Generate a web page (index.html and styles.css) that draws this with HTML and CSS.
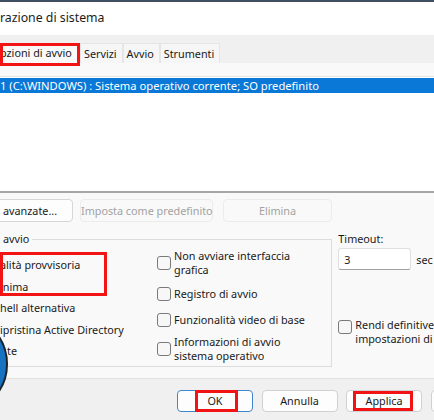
FILE: index.html
```html
<!DOCTYPE html>
<html lang="it">
<head>
<meta charset="utf-8">
<title>Configurazione di sistema</title>
<link rel="stylesheet" href="styles.css">
</head>
<body>
<div class="dialog">
  <div class="topbar"></div>
  <div class="title">razione di sistema</div>
  <div class="tabs">
    <div class="tab sel">pzioni di avvio<span class="mark mark-tab"></span></div>
    <div class="tab">Servizi</div>
    <div class="tab">Avvio</div>
    <div class="tab">Strumenti</div>
  </div>
  <div class="panel">
    <div class="list">
      <div class="row">1 (C:\WINDOWS) : Sistema operativo corrente; SO predefinito</div>
    </div>
    <div class="btnrow">
      <div class="btn b-adv">avanzate...</div>
      <div class="btn dis b-def">Imposta come predefinito</div>
      <div class="btn dis b-del">Elimina</div>
    </div>
    <div class="lower">
      <fieldset class="group">
        <legend class="legend">avvio</legend>
        <div class="cols">
          <div class="leftcol">
            <div class="litem">alità provvisoria</div>
            <div class="litem">inima</div>
            <div class="litem">hell alternativa</div>
            <div class="litem">ipristina Active Directory</div>
            <div class="litem t-te">te</div>
            <span class="mark mark-left"></span>
          </div>
          <div class="midcol">
            <label class="chk c1"><span class="box"></span><span class="txt">Non avviare interfaccia<br>grafica</span></label>
            <label class="chk c2"><span class="box"></span><span class="txt">Registro di avvio</span></label>
            <label class="chk c3"><span class="box"></span><span class="txt">Funzionalità video di base</span></label>
            <label class="chk c4"><span class="box"></span><span class="txt">Informazioni di avvio<br>sistema operativo</span></label>
          </div>
        </div>
      </fieldset>
      <div class="side">
        <div class="tlabel">Timeout:</div>
        <div class="trow"><div class="input">3</div><span class="sec">sec</span></div>
        <label class="chk perm"><span class="box"></span><span class="txt">Rendi definitive<br>impostazioni di</span></label>
      </div>
    </div>
  </div>
  <div class="footer">
    <div class="btn fb ok">OK<span class="mark mark-ok"></span></div>
    <div class="btn fb">Annulla</div>
    <div class="btn fb">Applica<span class="mark mark-apply"></span></div>
    <div class="btn fb"></div>
  </div>
  <div class="avatar"></div>
</div>
</body>
</html>
```

FILE: styles.css
```css
* { box-sizing: border-box; }
html, body { margin: 0; padding: 0; }
body {
  width: 434px;
  height: 420px;
  overflow: hidden;
  background: #ffffff;
  font-family: "Noto Sans", "Open Sans", sans-serif;
  font-size: 10.8px;
  color: #1a1a1a;
}
.dialog {
  position: relative;
  width: 434px;
  height: 420px;
  overflow: hidden;
}
.topbar { height: 2px; background: #3d4f60; }
.title {
  height: 33px;
  padding-top: 6px;
  font-size: 12.3px;
  line-height: 20px;
  color: #1b1b1b;
  white-space: nowrap;
}
.tabs {
  height: 28px;
  background: #f0f0f0;
  display: flex;
  align-items: flex-end;
  white-space: nowrap;
}
.tab {
  position: relative;
  height: 20px;
  line-height: 19px;
  padding: 0 5px 0 3px;
  background: #f6f6f6;
  border: 1px solid #e6e6e6;
  border-bottom: none;
  color: #1a1a1a;
}
.tab.sel {
  width: 80px;
  padding-left: 0;
  background: #f9f9f9;
  border: none;
}
.panel {
  background: #f9f9f9;
  padding-top: 13px;
  padding-bottom: 10px;
  border-bottom: 1px solid #e2e2e2;
  height: 316px;
}
.list {
  height: 117px;
  background: #ffffff;
  border-top: 1px solid #e4e4e4;
  border-bottom: 2px solid #a6a6a6;
  padding-top: 1px;
}
.row {
  height: 15px;
  line-height: 15px;
  font-size: 11.2px;
  padding-left: 0;
  background: #0a78d6;
  color: #ffffff;
  white-space: nowrap;
}
.btnrow {
  display: flex;
  gap: 7px;
  margin-top: 6px;
  height: 23px;
}
.btn {
  height: 23px;
  line-height: 21px;
  border: 1px solid #d6d6d6;
  border-radius: 4px;
  background: #fdfdfd;
  text-align: center;
  white-space: nowrap;
}
.b-adv { width: 83px; margin-left: -10px; text-align: left; padding-left: 12px; }
.b-def { width: 133px; }
.b-del { width: 109px; margin-left: 3px; }
.btn.dis { color: #a2a2a2; border-color: #ececec; background: #f9f9f9; }
.lower {
  display: flex;
  margin-top: 10px;
}
.group {
  width: 333px;
  height: 135px;
  margin: 0;
  padding: 0;
  border: 1px solid #dcdcdc;
  border-left: none;
}
.legend {
  padding: 0 3px;
  margin-left: 0;
  line-height: 14px;
}
.cols { display: flex; }
.leftcol {
  position: relative;
  width: 157px;
  padding-top: 12px;
  display: flex;
  flex-direction: column;
  gap: 7.5px;
}
.litem { line-height: 14px; white-space: nowrap; }
.t-te { padding-left: 7px; }
.midcol {
  padding-top: 3px;
  display: flex;
  flex-direction: column;
}
.chk {
  display: flex;
  align-items: center;
  gap: 3px;
}
.chk .txt { line-height: 13.5px; white-space: nowrap; }
.box {
  width: 14px;
  height: 14px;
  border: 1px solid #7a7a7a;
  border-radius: 3px;
  background: #f7f7f7;
  flex: none;
}
.c2 { margin-top: 11px; }
.c3 { margin-top: 12px; }
.c4 { margin-top: 8px; }
.side {
  padding-left: 6px;
  padding-top: 0;
}
.tlabel { line-height: 14px; }
.trow { display: flex; align-items: center; margin-top: 2px; gap: 5px; }
.input {
  width: 73px;
  height: 22px;
  line-height: 21px;
  padding-left: 5px;
  background: #ffffff;
  border: 1px solid #e0e0e0;
  border-bottom: 1px solid #a0a0a0;
  border-radius: 3px;
}
.sec { white-space: nowrap; }
.perm {
  align-items: flex-start;
  margin-top: 48px;
}
.perm .box { margin-top: 2px; }
.footer {
  background: #f0f0f0;
  height: 41px;
  padding-top: 11px;
  padding-left: 177px;
  display: flex;
  gap: 8.5px;
}
.fb {
  position: relative;
  width: 76px;
  height: 22px;
  line-height: 20px;
  flex: none;
  border-color: #d0d0d0;
}
.fb.ok { border-color: #3f86cc; }
.mark {
  position: absolute;
  border: 3px solid #f21414;
  pointer-events: none;
}
.mark-tab { left: 0; top: 0; width: 80px; height: 23px; }
.mark-left { left: 0; top: 6px; width: 107px; height: 44px; }
.mark-ok { left: 17px; top: -1px; width: 43px; height: 22px; }
.mark-apply { left: 6px; top: 0; width: 60px; height: 20px; }
.avatar {
  position: absolute;
  left: -94px;
  top: 313px;
  width: 102px;
  height: 102px;
  border-radius: 50%;
  background: #1872c2;
  border: 2px solid #1d2228;
}
```
